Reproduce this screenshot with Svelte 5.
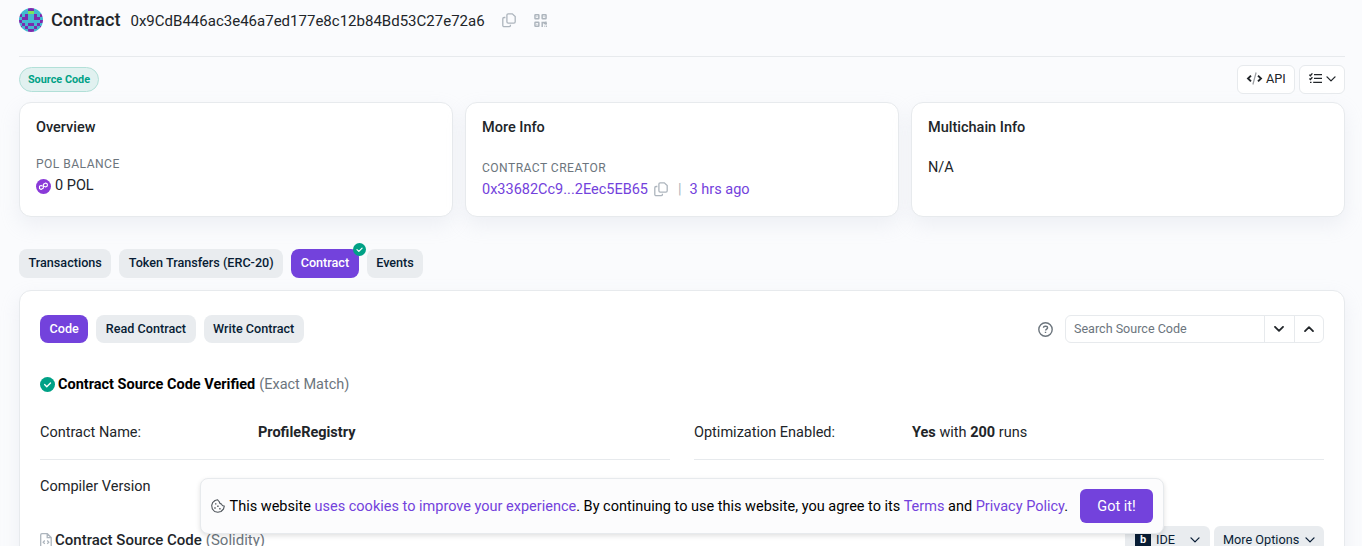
<script>
  const pattern = [
    '...pp...',
    '...gg...',
    'p.p..p.p',
    '.pp..pp.',
    'p......p',
    '.p.pp.p.',
    'p.p..p.p',
    '...pp...'
  ];
  const colors = { '.': '#43b8d1', p: '#7a2bae', g: '#7de35c' };
  const tabs = ['Transactions', 'Token Transfers (ERC-20)', 'Contract', 'Events'];
  const subTabs = ['Code', 'Read Contract', 'Write Contract'];
</script>

{#snippet copyIcon()}
  <svg class="copy" width="14" height="15" viewBox="0 0 14 15" fill="none" stroke="currentColor" stroke-width="1.3">
    <path d="M6.2 .8h4.1l2.9 2.8v5.2a1.3 1.3 0 0 1-1.3 1.3H6.2a1.3 1.3 0 0 1-1.3-1.3V2.1A1.3 1.3 0 0 1 6.2.8z" />
    <path d="M3.4 4.5H2.1A1.3 1.3 0 0 0 .8 5.8v6.6a1.3 1.3 0 0 0 1.3 1.3h5a1.3 1.3 0 0 0 1.3-1.3v-.7" />
  </svg>
{/snippet}

{#snippet chevron(w)}
  <svg class="chev" width="10" height="6" viewBox="0 0 10 6" fill="none" stroke="currentColor" stroke-width={w} stroke-linecap="round" stroke-linejoin="round"><path d="M1 .9l4 4 4-4" /></svg>
{/snippet}

{#snippet check(size)}
  <svg class="check" width={size} height={size} viewBox="0 0 14 14"><circle cx="7" cy="7" r="7" fill="#00a186" /><path d="M4.3 7.1l2 1.9 3.5-3.5" fill="none" stroke="#fff" stroke-width="1.3" stroke-linecap="round" stroke-linejoin="round" /></svg>
{/snippet}

<main>
  <header>
    <svg class="avatar" width="24" height="24" viewBox="0 0 8 8" shape-rendering="crispEdges">
      {#each pattern as row, y}
        {#each row as cell, x}
          <rect {x} {y} width="1" height="1" fill={colors[cell]} />
        {/each}
      {/each}
    </svg>
    <h1>Contract</h1>
    <span class="address">0x9CdB446ac3e46a7ed177e8c12b84Bd53C27e72a6</span>
    {@render copyIcon()}
    <svg class="qr" width="13" height="13" viewBox="0 0 13 13" fill="none" stroke="currentColor" stroke-width="1.5">
      <rect x=".95" y=".75" width="3.9" height="3.9" rx=".5" /><rect x="8.15" y=".75" width="3.9" height="3.9" rx=".5" /><rect x=".95" y="8.35" width="3.9" height="3.9" rx=".5" />
      <path d="M8.2 13V8.4h2.2v1.2h2.6M11.9 7.6v3.2M10.4 12.3h.9M12.1 12.3h.9" />
      <path d="M2.4 2.7h1M9.6 2.7h1M2.4 10.3h1" stroke-width="1" />
    </svg>
  </header>

  <div class="toolbar">
    <span class="badge">Source Code</span>
    <div class="actions">
      <button class="outline api">
        <svg width="17" height="13" viewBox="0 0 17 13" fill="none" stroke="currentColor" stroke-width="1.9"><path d="M5 3.6L2 6.5l3 2.9M12 3.6l3 2.9-3 2.9" /><path d="M10.1.5L6.900 12.500" stroke="#9a9da1" stroke-width="1.2" /></svg>
        API
      </button>
      <button class="outline list">
        <svg width="13" height="11" viewBox="0 0 13 11" fill="none" stroke="currentColor" stroke-width="1.3"><path d="M.4 1.7l1 1L3.400.4M.4 5.500l1 1 2-2.300M5 1.600h8M5 5.400h8M4.200 9.400H13M1 9.400h1.500" /></svg>
        {@render chevron(1.3)}
      </button>
    </div>
  </div>

  <section class="cards">
    <article class="card">
      <h2>Overview</h2>
      <h3>POL BALANCE</h3>
      <p class="balance">
        <svg width="15" height="15" viewBox="0 0 15 15"><circle cx="7.5" cy="7.5" r="7.5" fill="#8a3ad8" /><path d="M6.600 7.200L5.100 6.400 3.500 7.300v2.200l1.600.9 2.300-1.300V5.300l2.300-1.300 1.600.9v2.200L9.700 8l-1.500-.8" fill="none" stroke="#fff" stroke-width="1.100" stroke-linejoin="round" /></svg>
        <span>0 POL</span>
      </p>
    </article>
    <article class="card more">
      <h2>More Info</h2>
      <h3>CONTRACT CREATOR</h3>
      <p class="creator"><a href="#creator">0x33682Cc9...2Eec5EB65</a>{@render copyIcon()}<i>|</i><a href="#time">3 hrs ago</a></p>
    </article>
    <article class="card multi">
      <h2>Multichain Info</h2>
      <p>N/A</p>
    </article>
  </section>

  <nav class="tabs">
    {#each tabs as tab}
      <button class="tab" class:active={tab === 'Contract'}>{tab}{#if tab === 'Contract'}<span class="mark">{@render check(13)}</span>{/if}</button>
    {/each}
  </nav>

  <section class="panel">
    <div class="panel-head">
      <nav class="tabs">
        {#each subTabs as tab}
          <button class="tab" class:active={tab === 'Code'}>{tab}</button>
        {/each}
      </nav>
      <div class="search">
        <svg class="help" width="15" height="15" viewBox="0 0 15 15" fill="none" stroke="#6c757d" stroke-width="1.4"><circle cx="7.5" cy="7.5" r="6.7" /><path d="M5.4 5.7c.1-1 .8-1.500 1.700-1.500h.8c1 0 1.700.7 1.700 1.600 0 1.300-2 1.400-2 2.800M7.500 9.700v1.400" /></svg>
        <div class="group">
          <input placeholder="Search Source Code" />
          <button aria-label="Next">{@render chevron(1.8)}</button>
          <button aria-label="Previous" class="up">{@render chevron(1.8)}</button>
        </div>
      </div>
    </div>

    <p class="verified">{@render check(15)}<b>Contract Source Code Verified</b> <span>(Exact Match)</span></p>

    <div class="facts">
      <div class="fact line"><span>Contract Name:</span><b>ProfileRegistry</b></div>
      <div class="fact line"><span>Optimization Enabled:</span><div><b>Yes</b> with <b>200</b> runs</div></div>
      <div class="fact"><span>Compiler Version</span></div>
    </div>

    <div class="source">
      <p>
        <svg width="12" height="15" viewBox="0 0 12 15" fill="none" stroke="#adb5bd" stroke-width="1.3"><path d="M2 .7h5.3l3.900 3.800v8.300a1.400 1.400 0 0 1-1.400 1.400H2A1.400 1.400 0 0 1 .7 12.800V2.100A1.400 1.400 0 0 1 2 .7zM7.200.7v3.900h4M4.800 7.500L3.200 9.200l1.600 1.700M7.200 7.500l1.600 1.700-1.600 1.700" /></svg>
        <b>Contract Source Code</b> <span>(Solidity)</span>
      </p>
      <div class="menus">
        <button class="ide"><em>b</em>IDE {@render chevron(1.3)}</button>
        <button class="options">More Options {@render chevron(1.3)}</button>
      </div>
    </div>
  </section>
</main>

<aside>
  <svg width="14" height="14" viewBox="0 0 14 14" fill="none" stroke="#51575d" stroke-width="1.1"><path d="M6.600.8L4 1.500 1.600 3.700.7 6.500l.6 3.400 2.300 2.600 3.200.8 3.200-.8 2.500-2.500.8-2.900c-1.400 0-2.500-.7-2.800-2-1.500-.3-2.200-1.200-2.300-2.500C7.500 2 7 1.400 6.600.8z" stroke-linejoin="round" /><path d="M4.700 4.200v1.400M4 8.300v1.400M6.900 6.600V8M8.900 9v1.400" stroke-width="1.400" /></svg>
  <span>This website <a href="#cookies">uses cookies to improve your experience</a>. By continuing to use this website, you agree to its <a href="#terms">Terms</a> and <a href="#privacy">Privacy Policy</a>.</span>
  <button>Got it!</button>
</aside>

<style>
  :global(body) { background: #fafbfd; overflow: hidden; }
  :global(#app) { height: 546px; overflow: hidden; }
  * { box-sizing: border-box; }
  main, aside { font: 14.5px/22px Roboto, sans-serif; color: #212529; }
  main { padding: 0 17px 0 19px; }
  h1, h2, h3, p { margin: 0; }
  svg { flex: none; }
  button, input { font: inherit; margin: 0; }
  a { color: #7342dc; text-decoration: none; }
  b { font-weight: 700; }
  header { height: 57px; border-bottom: 1px solid #e7eaed; display: flex; align-items: center; padding-bottom: 16px; }
  .avatar { border-radius: 50%; }
  h1 { font-size: 18.1px; font-weight: 500; margin: 0 10px 0 8px; }
  .address { font-size: 15.03px; padding-top: 2px; }
  .copy { color: #adb5bd; }
  header .copy { margin-left: 17.5px; }
  .qr { color: #adb5bd; margin-left: 18px; }
  .toolbar { height: 45px; display: flex; align-items: center; justify-content: space-between; }
  .badge { width: 80px; text-align: center; height: 25px; border: 1px solid #b2e0d8; border-radius: 13px; background: #e1f1f0; color: #00a186; font-size: 10.85px; line-height: 23px; font-weight: 700; }
  .actions { display: flex; gap: 4px; }
  .outline { height: 29px; background: #fff; border: 1px solid #e7eaed; border-radius: 6px; color: #212529; font-size: 12.7px; display: flex; align-items: center; }
  .api { width: 58px; padding: 0 0 2px 8px; gap: 3px; }
  .list { width: 46px; padding: 0 0 2px 9px; gap: 4px; }
  .cards { display: grid; grid-template-columns: repeat(3, 1fr); gap: 12px; }
  .card, .panel { background: #fff; border: 1px solid #e7eaed; border-radius: 12px; box-shadow: 0 8px 19px rgba(189, 197, 209, .2); }
  .card { height: 115px; padding: 15px 16px; }
  h2 { font-size: 14.5px; line-height: 20px; font-weight: 500; }
  h3 { font-size: 12.1px; line-height: 18px; font-weight: 400; color: #6c757d; letter-spacing: .45px; margin-top: 17px; }
  .balance { display: flex; align-items: center; gap: 4px; margin-top: 1px; }
  .balance svg { margin-top: 1px; }
  .balance span { padding-top: 1px; }
  .more h3 { margin-top: 21px; }
  .creator { display: flex; align-items: center; margin-top: 2px; }
  .creator .copy { margin: -2px 0 0 6px; }
  .creator i { font-style: normal; color: #adb5bd; margin: 0 8px 0 10px; }
  .multi p { margin-top: 19px; }
  .tabs { display: flex; gap: 8px; }
  main > .tabs { margin: 32px 0 12px; }
  .tab { position: relative; height: 28px; border: 0; border-radius: 8px; padding: 0 9.5px; background: #e9ecef; color: #081d35; font-size: 12.63px; font-weight: 500; white-space: nowrap; }
  main > .tabs .tab { height: 29px; padding-bottom: 2px; }
  .tab.active { background: #7342dc; color: #fff; }
  .mark { position: absolute; right: -7px; top: -6px; height: 13px; display: flex; }
  .panel { height: 400px; padding: 24px 20px; }
  .panel-head { display: flex; justify-content: space-between; }
  .search { display: flex; align-items: center; gap: 12px; }
  .group { display: flex; width: 259px; height: 28px; border: 1px solid #e7eaed; border-radius: 6px; }
  input { width: 198px; border: 0; background: none; padding: 0 8px; font-size: 12.55px; outline: 0; }
  input::placeholder { color: #6c757d; opacity: 1; }
  .group button { flex: 1; padding: 0; border: 0; border-left: 1px solid #e7eaed; background: none; color: #212529; display: grid; place-items: center; }
  .up .chev { transform: rotate(180deg); }
  .verified { display: flex; align-items: center; margin-top: 31px; color: #000; }
  .verified .check { margin-top: -2px; }
  .verified b { margin: 0 4px 0 3px; }
  .verified span, .source span { color: #6c757d; }
  .facts { display: grid; grid-template-columns: 630px 630px; column-gap: 24px; margin-top: 20px; }
  .fact { display: flex; height: 54px; padding-top: 6px; }
  .fact.line { border-bottom: 1px solid #e7eaed; height: 44px; }
  .fact:not(.line) { padding-top: 16px; }
  .fact > span { width: 218px; }
  .source { display: flex; justify-content: space-between; align-items: flex-start; margin-top: 12px; }
  .source p { display: flex; align-items: center; padding-top: 3px; gap: 4px; font-size: 15px; line-height: 22px; }
  .source p svg { margin-right: -1px; }
  .source b { font-weight: 500; }
  .menus { display: flex; gap: 4px; }
  .menus button { height: 28px; border: 0; border-radius: 6px; background: #e9ecef; color: #081d35; font-size: 12.7px; display: flex; align-items: center; padding: 0 9px; }
  .menus .ide { width: 85px; padding-right: 10px; }
  .ide em { width: 16px; height: 16px; margin: 0 5px 0 1px; background: #081d35; color: #fff; font: 700 11px/16px Roboto, sans-serif; }
  .ide .chev { margin-left: auto; }
  .options { width: 110px; justify-content: space-between; }
  aside { position: absolute; left: 200px; top: 478px; width: 964px; height: 56px; border: 1px solid #e7eaed; border-radius: 8px; background: #fcfcfd; color: #000; display: flex; align-items: center; padding: 0 10px; box-shadow: 0 2px 5px rgba(0, 0, 0, .12); white-space: nowrap; }
  aside svg { margin-right: 4.5px; }
  aside span { padding-top: 1px; }
  aside button { width: 73px; height: 34px; margin-left: auto; border: 0; border-radius: 6px; background: #7342dc; color: #fff; padding: 2px 0 0; }
</style>
